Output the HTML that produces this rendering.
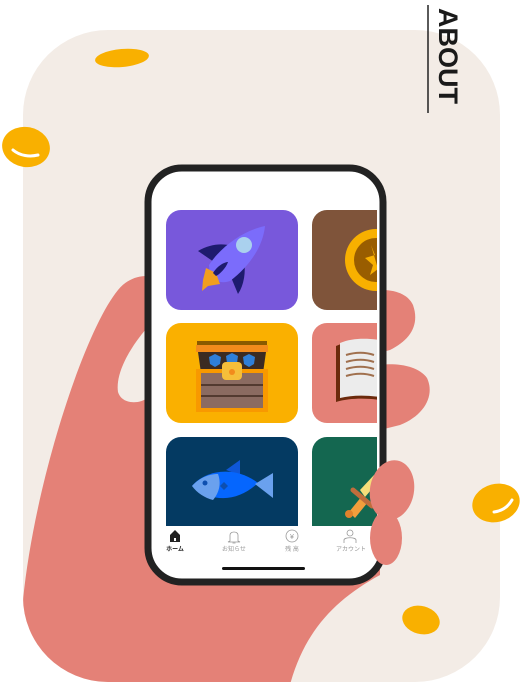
<!DOCTYPE html>
<html><head><meta charset="utf-8"><style>
html,body{margin:0;padding:0;background:#fff;overflow:hidden;width:523px;height:685px;}
body{position:relative;font-family:"Liberation Sans","Noto Sans CJK JP",sans-serif;}
.abs{position:absolute;}
.about{position:absolute;left:433px;top:8px;width:30px;height:106px;overflow:hidden;}
.about span{position:absolute;left:30px;top:0;transform-origin:0 0;transform:rotate(90deg);font-weight:bold;font-size:27px;color:#1a1a1a;white-space:nowrap;line-height:30px;}
.nav{position:absolute;font-size:6px;color:#999;text-align:center;width:60px;line-height:8px;}
</style></head><body>
<svg class="abs" style="left:0;top:0" width="523" height="685" viewBox="0 0 523 685">
  <clipPath id="bg"><rect x="23" y="30" width="477" height="652" rx="85"/></clipPath>
  <rect x="23" y="30" width="477" height="652" rx="85" fill="#f3ece6"/>
  <g clip-path="url(#bg)">
  <path d="M23,720 L23,600 C35,480 85,330 118,290 C128,278 140,275 152,276 L380,276 L380,575 C325,605 293,645 283,720 Z" fill="#e48177"/>
  </g>
  <path d="M147,328 C132,345 115,372 118,392 C122,405 140,404 147,398 Z" fill="#f3ece6"/>
  <path d="M360,292 C380,288 405,288 413,305 C420,325 410,340 390,350 L360,358 Z" fill="#e48177"/>
  <path d="M360,368 C385,362 415,362 427,378 C435,395 425,415 400,425 L360,435 Z" fill="#e48177"/>
  <ellipse cx="122" cy="58" rx="27" ry="9" transform="rotate(-5 122 58)" fill="#f9b000"/>
  <ellipse cx="26" cy="147" rx="24" ry="20" transform="rotate(10 26 147)" fill="#f9b000"/>
  <path d="M13,150 C20,156 30,157 38,155" stroke="#fff" stroke-width="3" fill="none" stroke-linecap="round"/>
  <ellipse cx="496" cy="503" rx="24" ry="19" transform="rotate(-15 496 503)" fill="#f9b000"/>
  <path d="M494,512 C502,511 508,507 512,500" stroke="#fff" stroke-width="3" fill="none" stroke-linecap="round"/>
  <ellipse cx="421" cy="620" rx="19" ry="14" transform="rotate(15 421 620)" fill="#f9b000"/>
  <line x1="428" y1="5" x2="428" y2="113" stroke="#222" stroke-width="1.5"/>
  <rect x="148" y="168" width="235" height="414" rx="34" fill="#fff" stroke="#222" stroke-width="7"/>
  <clipPath id="scr"><rect x="152" y="172" width="225" height="354"/></clipPath>
  <g clip-path="url(#scr)">
    <rect x="166" y="210" width="132" height="100" rx="15" fill="#7858db"/>
    <path d="M198,251 C210,244 222,243 232,246 L214,262 Z" fill="#1e1b6e"/>
    <path d="M244,260 C246,272 244,285 238,294 L228,270 Z" fill="#1e1b6e"/>
    <path d="M209,265 C222,245 245,230 265,226 C263,246 250,266 230,281 C222,284 215,281 210,276 Z" fill="#7b6cfb"/>
    <circle cx="244" cy="245" r="8" fill="#aad1ee"/>
    <path d="M206,268 L216,273 L220,284 L208,286 L202,291 L203,280 Z" fill="#f29e1f"/>
    <path d="M213,273 C218,265 225,262 228,262 C226,268 220,274 216,276 Z" fill="#1e1b6e"/>
    <rect x="312" y="210" width="80" height="100" rx="15" fill="#7f543a"/>
    <circle cx="376" cy="260" r="31" fill="#f8b000"/>
    <circle cx="376" cy="260" r="22" fill="#995d00"/>
    <path d="M371,245 L375,255 L365,258 L373,265 L370,275 L378,269 Z" fill="#f8b000"/>
    <rect x="166" y="323" width="132" height="100" rx="15" fill="#fab000"/>
    <rect x="197" y="341" width="70" height="6" fill="#8a5a00"/>
    <rect x="196" y="345" width="72" height="7" fill="#f28b1c"/>
    <path d="M198,352 L266,352 L263,373 L201,373 Z" fill="#3c2b22"/>
    <path d="M209,357 l6,-3 l6,3 l-1,7 l-5,3 l-5,-3 Z" fill="#2f7fd8"/>
    <path d="M226,356 l6,-3 l6,3 l-1,7 l-5,3 l-5,-3 Z" fill="#2f7fd8"/>
    <path d="M243,357 l6,-3 l6,3 l-1,7 l-5,3 l-5,-3 Z" fill="#2f7fd8"/>
    <rect x="196" y="369" width="72" height="43" fill="#f89900"/>
    <rect x="201" y="373" width="62" height="35" fill="#8b6b61"/>
    <rect x="201" y="384" width="62" height="2" fill="#533a30"/>
    <rect x="201" y="395" width="62" height="2" fill="#533a30"/>
    <rect x="222" y="362" width="20" height="18" rx="4" fill="#f5be3a"/>
    <circle cx="232" cy="372" r="3" fill="#f28b1c"/>
    <rect x="312" y="323" width="80" height="100" rx="15" fill="#e48177"/>
    <path d="M336,346 C350,340 365,340 380,342 L380,400 C365,398 350,398 336,402 Z" fill="#6b2a0c"/>
    <path d="M340,343 C352,338 366,338 380,340 L380,397 C366,395 352,395 340,398 Z" fill="#ececec"/>
    <path d="M346,355 C356,352 365,352 374,355 M346,362 C356,359 365,359 374,362 M346,369 C356,366 365,366 374,369 M346,376 C356,373 365,373 374,376" stroke="#a0704e" stroke-width="2" fill="none"/>
    <rect x="166" y="437" width="132" height="110" rx="15" fill="#043a62"/>
    <path d="M226,470 L240,460 L240,475 Z" fill="#0f57d8"/>
    <path d="M192,486 C205,470 235,465 258,483 C240,500 215,505 192,486 Z" fill="#0566fe"/>
    <path d="M192,486 C200,477 210,474 218,474 C222,485 218,494 213,500 C205,498 197,493 192,486 Z" fill="#6aa1ee"/>
    <circle cx="205" cy="483" r="2.5" fill="#0d4fb0"/>
    <path d="M220,486 l4,-4 l4,4 l-4,4 Z" fill="#0d4fb0"/>
    <path d="M255,484 L273,473 L273,498 Z" fill="#6aa1ee"/>
    <rect x="312" y="437" width="80" height="110" rx="15" fill="#146750"/>
    <path d="M360,490 L374,475 L378,482 L365,497 Z" fill="#f5de7a"/>
    <path d="M349,512 L362,496 L368,502 L355,518 Z" fill="#f29e3c"/>
    <circle cx="349" cy="514" r="4" fill="#e0822c"/>
    <path d="M353,490 L372,506" stroke="#c06d3c" stroke-width="5" stroke-linecap="round"/>
  </g>
  <path d="M170,542 L170,535 L175,530 L180,535 L180,542 Z" fill="#222"/>
  <rect x="174" y="538" width="2" height="3" fill="#fff"/>
  <path d="M230,541 L230,535 C230,531 238,531 238,535 L238,541 L240,542 L228,542 Z M232.5,543 L235.5,543" stroke="#999" stroke-width="0.8" fill="none"/>
  <circle cx="292" cy="536" r="6" stroke="#999" stroke-width="0.8" fill="none"/>
  <text x="292" y="539" font-size="7" fill="#999" text-anchor="middle" font-family="Liberation Sans">¥</text>
  <circle cx="350" cy="533" r="3" stroke="#999" stroke-width="0.8" fill="none"/>
  <path d="M344,543 L344,540 C344,537 356,537 356,540 L356,543" stroke="#999" stroke-width="0.8" fill="none"/>
  <rect x="222" y="567" width="83" height="3" rx="1.5" fill="#111"/>
  <ellipse cx="392" cy="490" rx="22" ry="30" transform="rotate(10 392 490)" fill="#e48177"/>
  <ellipse cx="386" cy="538" rx="16" ry="27" fill="#e48177"/>
</svg>
<div class="nav" style="left:145px;top:546px;color:#222;font-weight:bold;">ホーム</div>
<div class="nav" style="left:204px;top:546px;">お知らせ</div>
<div class="nav" style="left:262px;top:546px;">残 高</div>
<div class="nav" style="left:321px;top:546px;">アカウント</div>
<div class="about"><span>ABOUT</span></div>
</body></html>
